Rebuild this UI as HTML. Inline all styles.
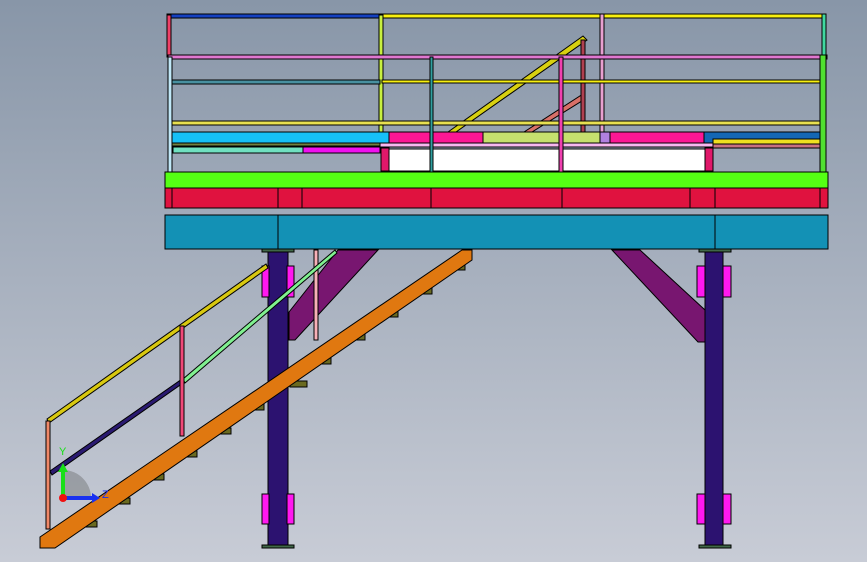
<!DOCTYPE html>
<html><head><meta charset="utf-8"><style>
html,body{margin:0;padding:0;width:867px;height:562px;overflow:hidden}
svg{display:block}
text{font-family:"Liberation Sans",sans-serif}
</style></head><body>
<svg width="867" height="562" viewBox="0 0 867 562" xmlns="http://www.w3.org/2000/svg">
<defs><linearGradient id="bg" x1="0" y1="0" x2="0" y2="1">
<stop offset="0" stop-color="#8896a8"/><stop offset="1" stop-color="#c8ccd6"/></linearGradient></defs>
<rect width="867" height="562" fill="url(#bg)"/>
<g stroke="#000" stroke-width="1">
<polygon points="448,132 583,36 587,40 456,132" fill="#d8d010"/>
<polygon points="524,132 583,94 585,99 532,132" fill="#d87068"/>
<rect x="581" y="40" width="4" height="93" fill="#b04050"/>
<rect x="167" y="14" width="215" height="4" fill="#1440c0"/>
<rect x="382" y="14" width="440" height="4" fill="#f8f010"/>
<rect x="167" y="15" width="4" height="42" fill="#f04068"/>
<rect x="822" y="14" width="4" height="42" fill="#40d8a0"/>
<rect x="379" y="15" width="4" height="133" fill="#c8f040"/>
<rect x="600" y="14" width="4" height="120" fill="#e8a0d0"/>
<rect x="168" y="55" width="659" height="4" fill="#e078d0"/>
<rect x="172" y="80" width="208" height="4" fill="#4890a0"/>
<rect x="382" y="80" width="438" height="3" fill="#f8f010"/>
<rect x="170" y="121" width="655" height="4" fill="#e8e050"/>
<rect x="172" y="132" width="217" height="11" fill="#16c0f7"/>
<rect x="389" y="132" width="94" height="11" fill="#fc1794"/>
<rect x="483" y="132" width="117" height="11" fill="#c6e06e"/>
<rect x="600" y="132" width="10" height="11" fill="#b080e0"/>
<rect x="610" y="132" width="94" height="11" fill="#fc1794"/>
<rect x="704" y="132" width="116" height="11" fill="#1467b4"/>
<rect x="172" y="143" width="208" height="3" fill="#708040"/>
<rect x="380" y="143" width="440" height="4" fill="#f8b8f0"/>
<rect x="173" y="147" width="130" height="6" fill="#70e0c0"/>
<rect x="303" y="147" width="77" height="6" fill="#f010f0"/>
<rect x="713" y="139" width="107" height="5" fill="#f0e020"/>
<rect x="713" y="144" width="107" height="4" fill="#c87080"/>
<rect x="389" y="149" width="317" height="22" fill="#ffffff"/>
<rect x="381" y="148" width="8" height="23" fill="#e0186a"/>
<rect x="705" y="148" width="8" height="23" fill="#e0186a"/>
<rect x="168" y="57" width="4" height="131" fill="#c0e8f8"/>
<rect x="430" y="57" width="3" height="131" fill="#30a0a0"/>
<rect x="559" y="57" width="4" height="131" fill="#f040b0"/>
<rect x="820" y="55" width="6" height="120" fill="#50e030"/>
<rect x="165" y="172" width="663" height="16" fill="#55ff14"/>
<rect x="165" y="188" width="663" height="20" fill="#e0123f"/>
<path d="M172 188v20M278 188v20M302 188v20M431 188v20M562 188v20M690 188v20M715 188v20M820 188v20" fill="none"/>
<rect x="165" y="215" width="663" height="34" fill="#1391b5"/>
<path d="M278 215v34M715 215v34" fill="none"/>
<polygon points="338,250 378,250 295,340 289,340 289,312" fill="#781670"/>
<polygon points="612,250 640,250 705,310 705,342 698,342" fill="#781670"/>
<rect x="262" y="249" width="32" height="3" fill="#406848"/>
<rect x="699" y="249" width="32" height="3" fill="#406848"/>
<rect x="268" y="252" width="20" height="294" fill="#2c1270"/>
<rect x="705" y="252" width="18" height="294" fill="#2c1270"/>
<rect x="262" y="545" width="32" height="3" fill="#406848"/>
<rect x="699" y="545" width="32" height="3" fill="#406848"/>
<g fill="#ff18f0">
<rect x="262" y="266" width="7" height="31"/><rect x="287" y="266" width="7" height="31"/>
<rect x="262" y="494" width="7" height="30"/><rect x="287" y="494" width="7" height="30"/>
<rect x="697" y="266" width="8" height="31"/><rect x="723" y="266" width="8" height="31"/>
<rect x="697" y="494" width="8" height="30"/><rect x="723" y="494" width="8" height="30"/>
</g>
<rect x="314" y="250" width="4" height="90" fill="#f8b0b8"/>
<polygon points="47,419 266,264 268,268 49,423" fill="#d8c810"/>
<polygon points="50,471 182,379 183,383 52,475" fill="#2a1a70"/>
<polygon points="183,379 335,250 337,253 185,383" fill="#80f090"/>
<rect x="46" y="421" width="4" height="108" fill="#f08868"/>
<rect x="180" y="326" width="4" height="110" fill="#f04878"/>
<g fill="#6a6a20">
<rect x="80" y="521" width="17" height="6"/><rect x="113" y="498" width="17" height="6"/><rect x="147" y="474" width="17" height="6"/>
<rect x="180" y="451" width="17" height="6"/><rect x="214" y="428" width="17" height="6"/><rect x="247" y="404" width="17" height="6"/>
<rect x="290" y="381" width="17" height="6"/><rect x="314" y="358" width="17" height="6"/><rect x="348" y="334" width="17" height="6"/>
<rect x="381" y="311" width="17" height="6"/><rect x="415" y="288" width="17" height="6"/><rect x="448" y="264" width="17" height="6"/>
</g>
<polygon points="40,537 462,250 472,250 472,260 55,548 40,548" fill="#e07810"/>
</g>
<path d="M63 498 L63 470 A28 28 0 0 1 91 498 Z" fill="#909498" opacity="0.8"/>
<rect x="61" y="470" width="4" height="27" fill="#18e018"/>
<polygon points="58,472 63,463 68,472" fill="#18e018"/>
<rect x="63" y="496" width="30" height="4" fill="#1830f0"/>
<polygon points="92,493 100,498 92,503" fill="#1830f0"/>
<circle cx="63" cy="498" r="4" fill="#f01010"/>
<text x="59" y="455" font-size="11" fill="#18e018">Y</text>
<text x="102" y="498" font-size="11" fill="#1830f0">Z</text>
</svg>
</body></html>
